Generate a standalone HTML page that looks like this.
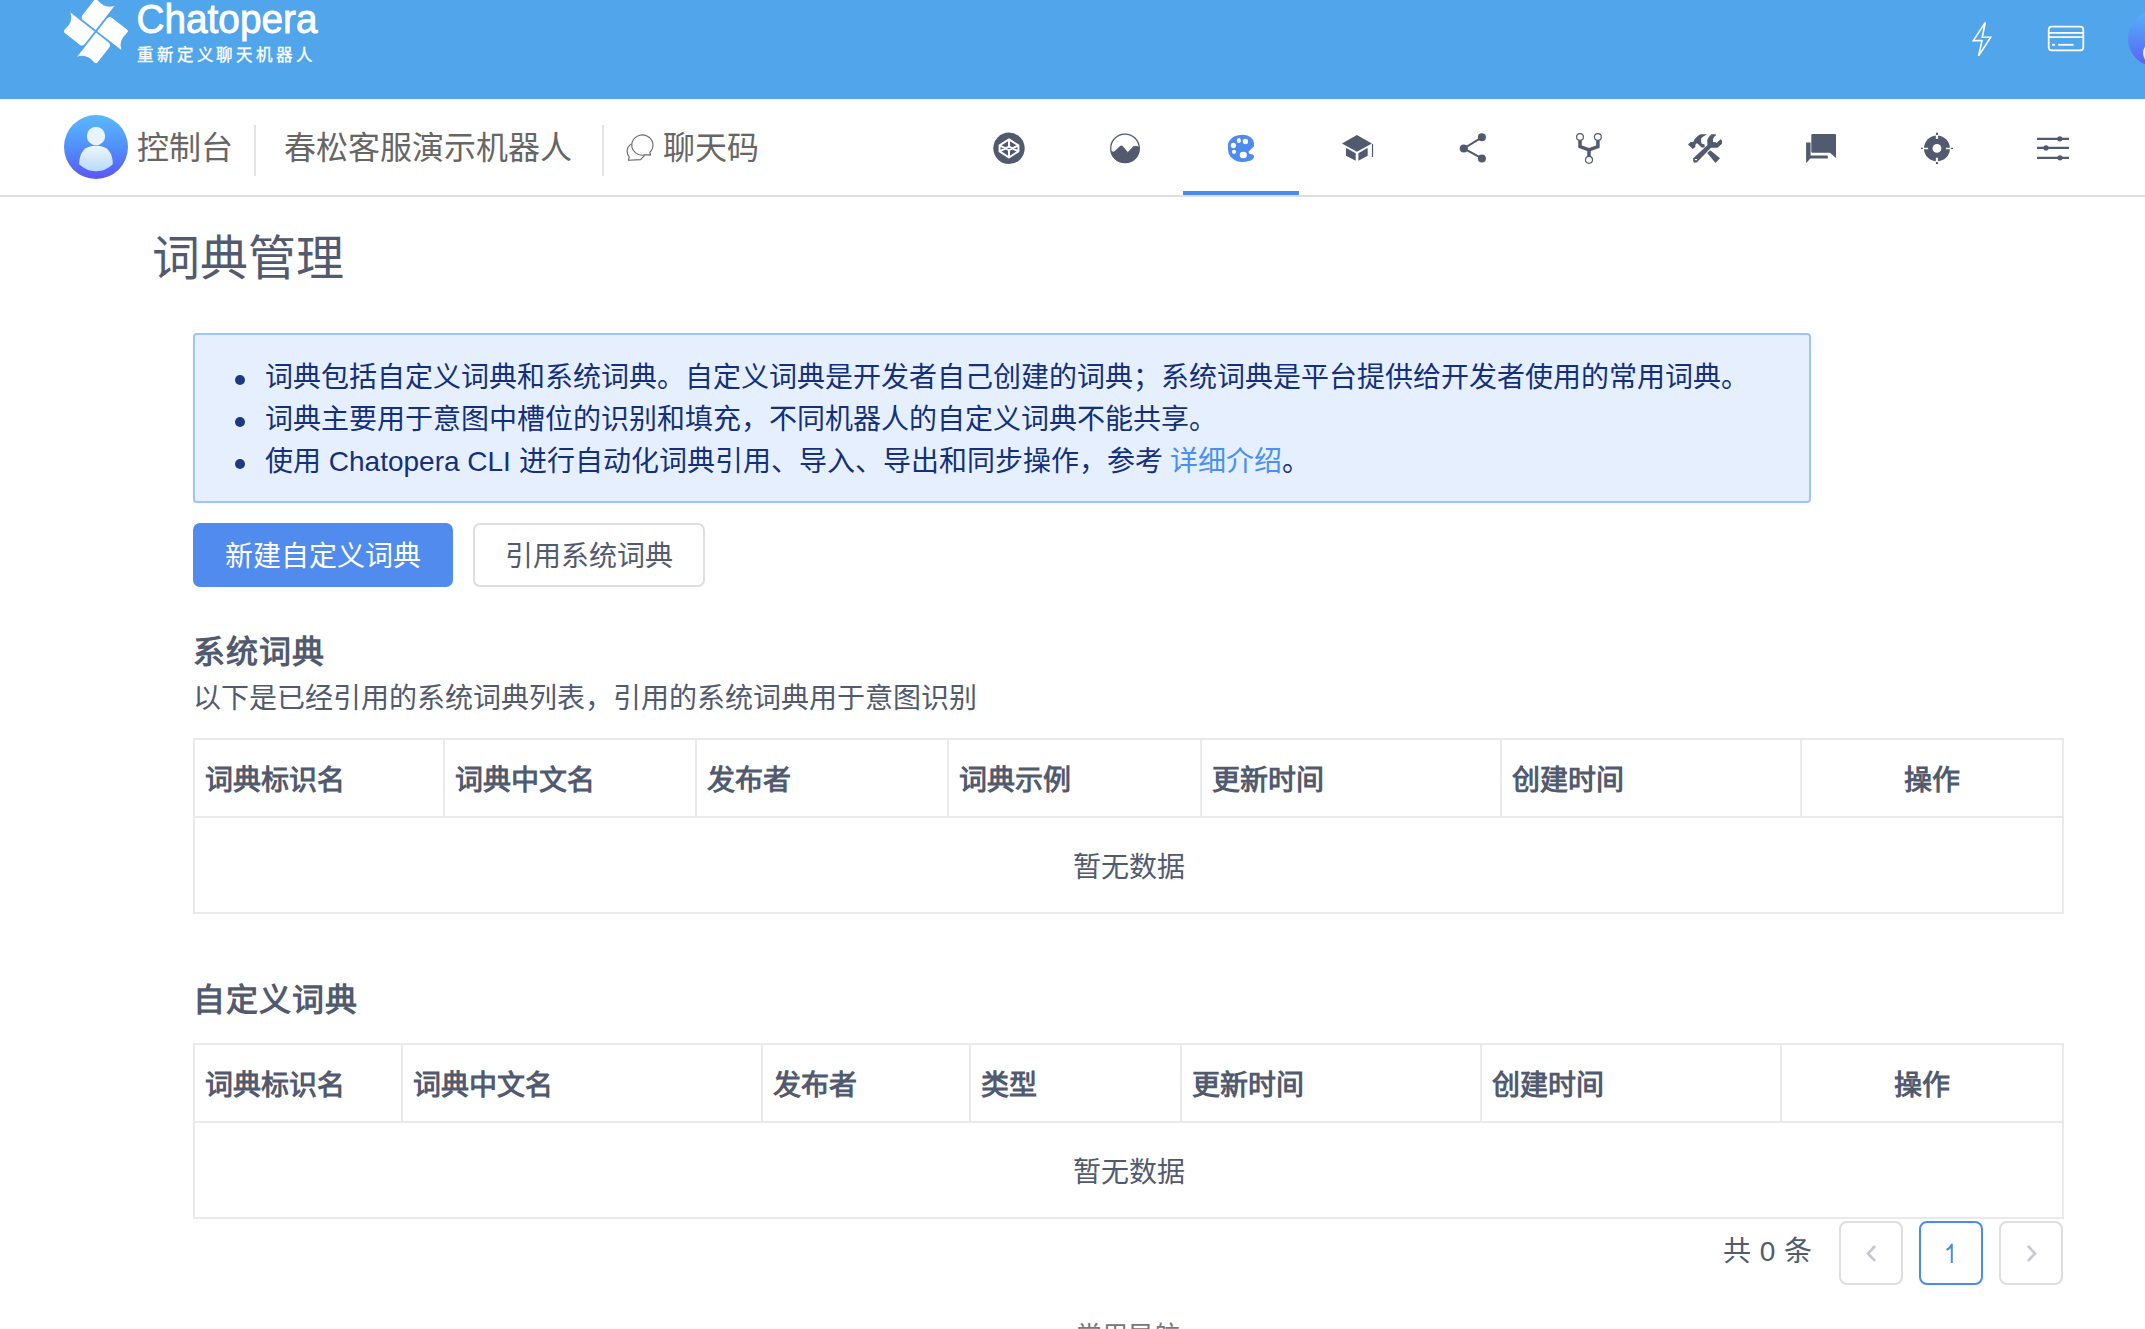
<!DOCTYPE html>
<html lang="zh-CN">
<head>
<meta charset="utf-8">
<title>词典管理</title>
<style>
html,body{margin:0;padding:0;}
body{width:2145px;height:1329px;overflow:hidden;position:relative;background:#fff;font-family:"Liberation Sans",sans-serif;color:#515a6e;}
.abs{position:absolute;white-space:nowrap;}
#hdr{position:absolute;left:0;top:0;width:2145px;height:99px;background:#50a5eb;}
#nav{position:absolute;left:0;top:99px;width:2145px;height:96px;background:#fff;border-bottom:2px solid #dcdee2;}
.navtxt{font-size:32px;line-height:40px;color:#666;}
.sep{position:absolute;width:2px;background:#e3e3e3;top:125px;height:51px;}
.tabline{position:absolute;left:1183px;top:191px;width:116px;height:4px;background:#4a8bf0;}
.ico{position:absolute;}
#title{font-size:48px;line-height:60px;color:#515a6e;}
#info{position:absolute;left:193px;top:333px;width:1614px;height:166px;background:#e6effe;border:2px solid #9ec4fd;border-radius:4px;}
.li{font-size:28px;line-height:42px;color:#14307a;}
.dot{position:absolute;width:10px;height:10px;border-radius:50%;background:#1c3a7e;}
.btn{position:absolute;top:523px;height:64px;box-sizing:border-box;border-radius:7px;font-size:28px;line-height:63px;text-align:center;}
.h2{font-size:32px;line-height:40px;font-weight:bold;color:#515a6e;letter-spacing:1px;}
.sub{font-size:28px;line-height:40px;color:#515a6e;}
table.tb{position:absolute;left:193px;border-collapse:collapse;table-layout:fixed;}
.tb th,.tb td{border:2px solid #e8eaec;padding:0 10px;text-align:left;font-size:28px;color:#515a6e;box-sizing:border-box;}
.tb th{font-weight:bold;height:78px;}
.tb td{height:96px;text-align:center;}
.pg{position:absolute;top:1221px;width:64px;height:64px;box-sizing:border-box;border:2px solid #dcdee2;border-radius:8px;}
</style>
</head>
<body>
<div id="hdr">
<svg class="ico" style="left:0;top:0" width="420" height="99" viewBox="0 0 420 99">
 <g fill="#fff" transform="translate(95.9 31.3) rotate(38) scale(1.035)">
  <path d="M0.9 -0.9 L30.5 -0.9 Q22.5 -6 24.6 -16.8 Q25.3 -19.8 22.3 -19.8 L4.4 -19.8 Q0.9 -19.8 0.9 -16.3 Z"/>
  <path transform="rotate(90)" d="M0.9 -0.9 L30.5 -0.9 Q22.5 -6 24.6 -16.8 Q25.3 -19.8 22.3 -19.8 L4.4 -19.8 Q0.9 -19.8 0.9 -16.3 Z"/>
  <path transform="rotate(180)" d="M0.9 -0.9 L30.5 -0.9 Q22.5 -6 24.6 -16.8 Q25.3 -19.8 22.3 -19.8 L4.4 -19.8 Q0.9 -19.8 0.9 -16.3 Z"/>
  <path transform="rotate(270)" d="M0.9 -0.9 L30.5 -0.9 Q22.5 -6 24.6 -16.8 Q25.3 -19.8 22.3 -19.8 L4.4 -19.8 Q0.9 -19.8 0.9 -16.3 Z"/>
 </g>
 <text x="136.5" y="33" font-family="Liberation Sans" font-size="41" fill="#fff" stroke="#fff" stroke-width="0.9" textLength="181" lengthAdjust="spacingAndGlyphs">Chatopera</text>
 <text x="137" y="60.5" font-size="16.5" fill="#fff" stroke="#fff" stroke-width="0.35" letter-spacing="2.85" font-family="Liberation Sans, sans-serif">重新定义聊天机器人</text>
</svg>
<svg class="ico" style="left:1960px;top:18px" width="45" height="45" viewBox="0 0 45 45">
 <path d="M25.3 4.5 L13.3 22.6 L22 22.6 L18.6 37.9 L30.7 19.3 L22.2 19.3 Z" fill="none" stroke="#fff" stroke-width="1.6" stroke-linejoin="miter"/>
</svg>
<svg class="ico" style="left:2040px;top:18px" width="52" height="45" viewBox="0 0 52 45">
 <rect x="8.7" y="8.7" width="34.6" height="23.6" rx="3" fill="none" stroke="#fff" stroke-width="1.8"/>
 <line x1="8.7" y1="14.8" x2="43.3" y2="14.8" stroke="#fff" stroke-width="1.8"/>
 <line x1="8.7" y1="19.2" x2="43.3" y2="19.2" stroke="#fff" stroke-width="1.8"/>
 <line x1="12" y1="26.8" x2="15" y2="26.8" stroke="#fff" stroke-width="1.8"/>
 <line x1="18.2" y1="26.8" x2="33.6" y2="26.8" stroke="#fff" stroke-width="1.8"/>
</svg>
<div class="ico" style="left:2128px;top:10px;width:57px;height:57px;border-radius:50%;background:linear-gradient(#55b3fb,#5961f4);overflow:hidden;"><div style="position:absolute;left:15px;top:30px;width:30px;height:26px;border-radius:50%;background:#e4f0fd"></div></div>
</div>
<div id="nav"></div>
<svg class="ico" style="left:64px;top:115px" width="64" height="64" viewBox="0 0 64 64">
 <defs>
  <linearGradient id="ag" x1="0" y1="0" x2="0" y2="1"><stop offset="0" stop-color="#5ab9fc"/><stop offset="0.5" stop-color="#5190fa"/><stop offset="1" stop-color="#5a56f3"/></linearGradient>
  <linearGradient id="bg2" x1="0" y1="0" x2="0" y2="1"><stop offset="0" stop-color="#eef6fe"/><stop offset="1" stop-color="#b9d9fb"/></linearGradient>
 </defs>
 <circle cx="32" cy="32" r="32" fill="url(#ag)"/>
 <circle cx="32" cy="21" r="9.2" fill="#e9f3fe"/>
 <path d="M15.2 49.3 Q15.2 30.8 32 30.8 Q48.8 30.8 48.8 49.3 Q41.5 56.3 32 56.3 Q22.5 56.3 15.2 49.3 Z" fill="url(#bg2)"/>
</svg>
<div class="abs navtxt" style="left:137px;top:128px;">控制台</div>
<div class="sep" style="left:254px"></div>
<div class="abs navtxt" style="left:284px;top:128px;">春松客服演示机器人</div>
<div class="sep" style="left:602px"></div>
<svg class="ico" style="left:600px;top:120px" width="60" height="50" viewBox="0 0 60 50">
 <g fill="none" stroke="#666" stroke-width="1.1" stroke-linejoin="round">
  <path d="M49.8 32.3 A10.6 10.1 0 1 0 45.3 34.8 L50.6 34.9 Z"/>
  <path d="M31.3 23.9 Q27 27 27.1 31.4 Q27.3 34.8 29.3 37 L28.4 40.3 L40.6 39.6 L44.6 35.3"/>
 </g>
</svg>
<div class="abs navtxt" style="left:663px;top:128px;">聊天码</div>
<div class="tabline"></div>

<svg class="ico" style="left:990px;top:128px" width="40" height="40" viewBox="0 0 40 40">
 <circle cx="19" cy="20.3" r="15.7" fill="#515a6e"/>
 <g fill="none" stroke="#fff" stroke-width="2" stroke-linejoin="round">
  <path d="M19 11.3 L28.4 17.4 L28.4 23.4 L19 29.5 L9.6 23.4 L9.6 17.4 Z"/>
  <path d="M19 11.3 L19 18.6 M19 22.2 L19 29.5"/>
  <path d="M9.6 17.4 L19 22.2 L28.4 17.4 M9.6 23.4 L19 18.6 L28.4 23.4"/>
 </g>
</svg>
<svg class="ico" style="left:1105px;top:128px" width="40" height="40" viewBox="0 0 40 40">
 <circle cx="20" cy="20.4" r="14.3" fill="none" stroke="#515a6e" stroke-width="1.3"/>
 <path d="M6.06 23.6 L9 24 L15.5 18 L17.3 18 L22.9 24.6 L28.5 18.3 L32 18.3 L34.25 19.2 A14.3 14.3 0 0 1 6.06 23.6 Z" fill="#515a6e" stroke="#515a6e" stroke-width="0.6"/>
</svg>
<svg class="ico" style="left:1221px;top:128px" width="40" height="40" viewBox="0 0 40 40">
 <path fill="#4f8bef" d="M33 18.2 L27.7 23.6 Q27.4 26.2 30 26.3 L31.2 26.3 Q33.3 26.6 33 29.2 Q31.5 32.5 27.5 33 Q25 34.2 20.5 34 Q13 33.5 9 28 Q7 25 7 21 L7 16 Q8.5 11 13 8.5 Q17 6.8 22 6.8 Q27 7 30 9.5 Q33 12 33 15 Z"/>
 <g fill="#fff">
  <ellipse cx="17.9" cy="12.5" rx="2" ry="2.5"/>
  <circle cx="24.4" cy="13.5" r="2.7"/>
  <ellipse cx="12.4" cy="17.5" rx="2.6" ry="2.7"/>
  <ellipse cx="13" cy="23.8" rx="2.1" ry="2.1"/>
  <ellipse cx="22.3" cy="27" rx="3.6" ry="3.2"/>
 </g>
</svg>
<svg class="ico" style="left:1337px;top:128px" width="40" height="40" viewBox="0 0 40 40">
 <g fill="#515a6e">
  <path d="M5 15.5 L19.9 6.9 L34.9 15.5 L19.9 23.8 Z"/>
  <path d="M9 20.2 L9.8 20.2 L18.7 25.3 L18.7 32.8 L9 27.7 Z"/>
  <path d="M30.7 20.2 L29.9 20.2 L21.4 25.3 L21.4 32.8 L30.7 27.7 Z"/>
  <rect x="34.9" y="16" width="1.2" height="13"/>
 </g>
</svg>
<svg class="ico" style="left:1453px;top:128px" width="40" height="40" viewBox="0 0 40 40">
 <g fill="#515a6e"><circle cx="28.9" cy="9.3" r="4"/><circle cx="10.8" cy="20.5" r="4.1"/><circle cx="28.9" cy="30.4" r="4"/></g>
 <path d="M28.9 9.3 L10.8 20.5 L28.9 30.4" fill="none" stroke="#515a6e" stroke-width="2"/>
</svg>
<svg class="ico" style="left:1569px;top:128px" width="40" height="40" viewBox="0 0 40 40">
 <g fill="none" stroke="#515a6e">
  <circle cx="11" cy="9" r="3.4" stroke-width="1.2"/>
  <circle cx="28.9" cy="9" r="3.4" stroke-width="1.2"/>
  <circle cx="20" cy="31.8" r="3.5" stroke-width="1.2"/>
  <path d="M11 12.4 L11 18.6 L20 21.9 L28.9 18.6 L28.9 12.4 M20 21.9 L20 28.3" stroke-width="3.5" stroke-linejoin="miter"/>
 </g>
</svg>
<svg class="ico" style="left:1685px;top:128px" width="40" height="40" viewBox="0 0 40 40">
 <g fill="#515a6e">
  <path d="M3 16.4 L5.6 14 L8.2 14 Q9.5 10.5 12.5 8.2 Q14.5 6.4 16 6.2 L21.8 6.2 L21.6 6.8 Q18.3 8.2 16.2 10.3 Q15.8 13.5 16.5 15.5 L19.6 16.6 L19.6 19.4 L16.6 19.6 L12.5 15.4 L11.3 15.4 Q9.8 16.8 10.3 18.2 L10.8 18.4 L7.8 21 Z"/>
  <path d="M22.5 18.6 Q22.5 15.5 22.2 12 Q23.5 8.5 26.4 6.2 L30.9 6.2 L30.9 7.3 Q28.2 9.5 28 11 L28 14 L31 14.2 L31.5 15 L35.6 11.2 L37 12.5 L37 15.8 L32.5 19.8 L26 19.8 Z"/>
  <path d="M8.2 30.3 L22.3 17.2 L26.2 19.6 L11.7 34.5 L9.4 34.8 L8.2 33.5 Z"/>
  <path d="M22.2 25 L25.3 22.2 L35 30.3 L30.5 35 Z"/>
 </g>
 <rect x="9.9" y="31" width="2.2" height="1.2" fill="#fff"/>
</svg>
<svg class="ico" style="left:1801px;top:128px" width="40" height="40" viewBox="0 0 40 40">
 <g fill="#515a6e">
  <path d="M11.3 5.9 Q10.3 5.9 10.3 7 L10.3 23.8 Q10.3 24.8 11.3 24.8 L29 24.8 L35 30 L35 7 Q35 5.9 34 5.9 Z"/>
  <path d="M5.1 14.4 L9.6 14.4 L9.6 27.5 L26.8 27.5 L26.8 30.5 L9.3 30.5 L5.1 35.3 Z"/>
 </g>
</svg>
<svg class="ico" style="left:1917px;top:128px" width="40" height="40" viewBox="0 0 40 40">
 <circle cx="19.95" cy="20.4" r="13" fill="#515a6e"/>
 <circle cx="19.95" cy="20.4" r="4.4" fill="#fff"/>
 <g stroke="#fff"><path d="M19.95 6.9 L19.95 11.1 M19.95 29.8 L19.95 33.9" stroke-width="2.2"/><path d="M6.9 20.4 L11.1 20.4 M28.9 20.4 L33 20.4" stroke-width="1.5"/></g>
 <g stroke="#515a6e"><path d="M19.95 4.8 L19.95 6.9 M19.95 33.9 L19.95 36" stroke-width="2"/><path d="M3.9 20.4 L6 20.4 M33.9 20.4 L36 20.4" stroke-width="1.3"/></g>
</svg>
<svg class="ico" style="left:2033px;top:128px" width="40" height="40" viewBox="0 0 40 40">
 <g stroke="#515a6e" stroke-width="2.2" fill="none"><path d="M4 10.8 L36 10.8 M4 19.9 L36 19.9 M4 29.8 L36 29.8"/></g>
 <g fill="#515a6e"><circle cx="26.8" cy="10.8" r="2.6"/><circle cx="13" cy="19.9" r="2.6"/><circle cx="27" cy="29.8" r="2.6"/></g>
</svg>

<div id="title" class="abs" style="left:152px;top:229px;">词典管理</div>
<div id="info">
 <div class="dot" style="left:40px;top:40px"></div>
 <div class="dot" style="left:40px;top:82px"></div>
 <div class="dot" style="left:40px;top:124px"></div>
 <div class="abs li" style="left:70px;top:22px">词典包括自定义词典和系统词典。自定义词典是开发者自己创建的词典；系统词典是平台提供给开发者使用的常用词典。</div>
 <div class="abs li" style="left:70px;top:64px">词典主要用于意图中槽位的识别和填充，不同机器人的自定义词典不能共享。</div>
 <div class="abs li" style="left:70px;top:106px">使用 Chatopera CLI 进行自动化词典引用、导入、导出和同步操作，参考 <span style="color:#4a8ff2">详细介绍</span>。</div>
</div>
<div class="btn" style="left:193px;width:260px;background:#518bee;color:#fff;border:2px solid #518bee;">新建自定义词典</div>
<div class="btn" style="left:473px;width:232px;background:#fff;color:#515a6e;border:2px solid #dcdee2;">引用系统词典</div>
<div class="abs h2" style="left:193px;top:632px">系统词典</div>
<div class="abs sub" style="left:193px;top:679px">以下是已经引用的系统词典列表，引用的系统词典用于意图识别</div>
<table class="tb" style="top:738px;width:1869px">
 <colgroup><col style="width:250px"><col style="width:252px"><col style="width:252px"><col style="width:253px"><col style="width:300px"><col style="width:300px"><col style="width:262px"></colgroup>
 <tr><th>词典标识名</th><th>词典中文名</th><th>发布者</th><th>词典示例</th><th>更新时间</th><th>创建时间</th><th style="text-align:center">操作</th></tr>
 <tr><td colspan="7">暂无数据</td></tr>
</table>
<div class="abs h2" style="left:193px;top:980px">自定义词典</div>
<table class="tb" style="top:1043px;width:1869px">
 <colgroup><col style="width:208px"><col style="width:360px"><col style="width:208px"><col style="width:211px"><col style="width:300px"><col style="width:300px"><col style="width:282px"></colgroup>
 <tr><th>词典标识名</th><th>词典中文名</th><th>发布者</th><th>类型</th><th>更新时间</th><th>创建时间</th><th style="text-align:center">操作</th></tr>
 <tr><td colspan="7">暂无数据</td></tr>
</table>
<div class="abs sub" style="left:1723px;top:1232px;word-spacing:1px">共 0 条</div>
<div class="pg" style="left:1839px"><svg width="60" height="60" viewBox="0 0 60 60" style="position:absolute;left:0;top:0"><path d="M34 23 L27 30.5 L34 38" fill="none" stroke="#c5c8ce" stroke-width="2.6"/></svg></div>
<div class="pg" style="left:1919px;border-color:#4a8bf0;"><svg width="60" height="60" viewBox="0 0 60 60" style="position:absolute;left:0;top:0"><path d="M30.8 20.8 L30.8 40 M30.8 21.5 Q29 25.5 25.5 27" fill="none" stroke="#4a8bf0" stroke-width="2"/></svg></div>
<div class="pg" style="left:1999px"><svg width="60" height="60" viewBox="0 0 60 60" style="position:absolute;left:0;top:0"><path d="M27 23 L34 30.5 L27 38" fill="none" stroke="#c5c8ce" stroke-width="2.6"/></svg></div>
<div class="abs" style="left:1076px;top:1316px;font-size:26px;line-height:40px;color:#777">常用导航</div>
</body>
</html>
